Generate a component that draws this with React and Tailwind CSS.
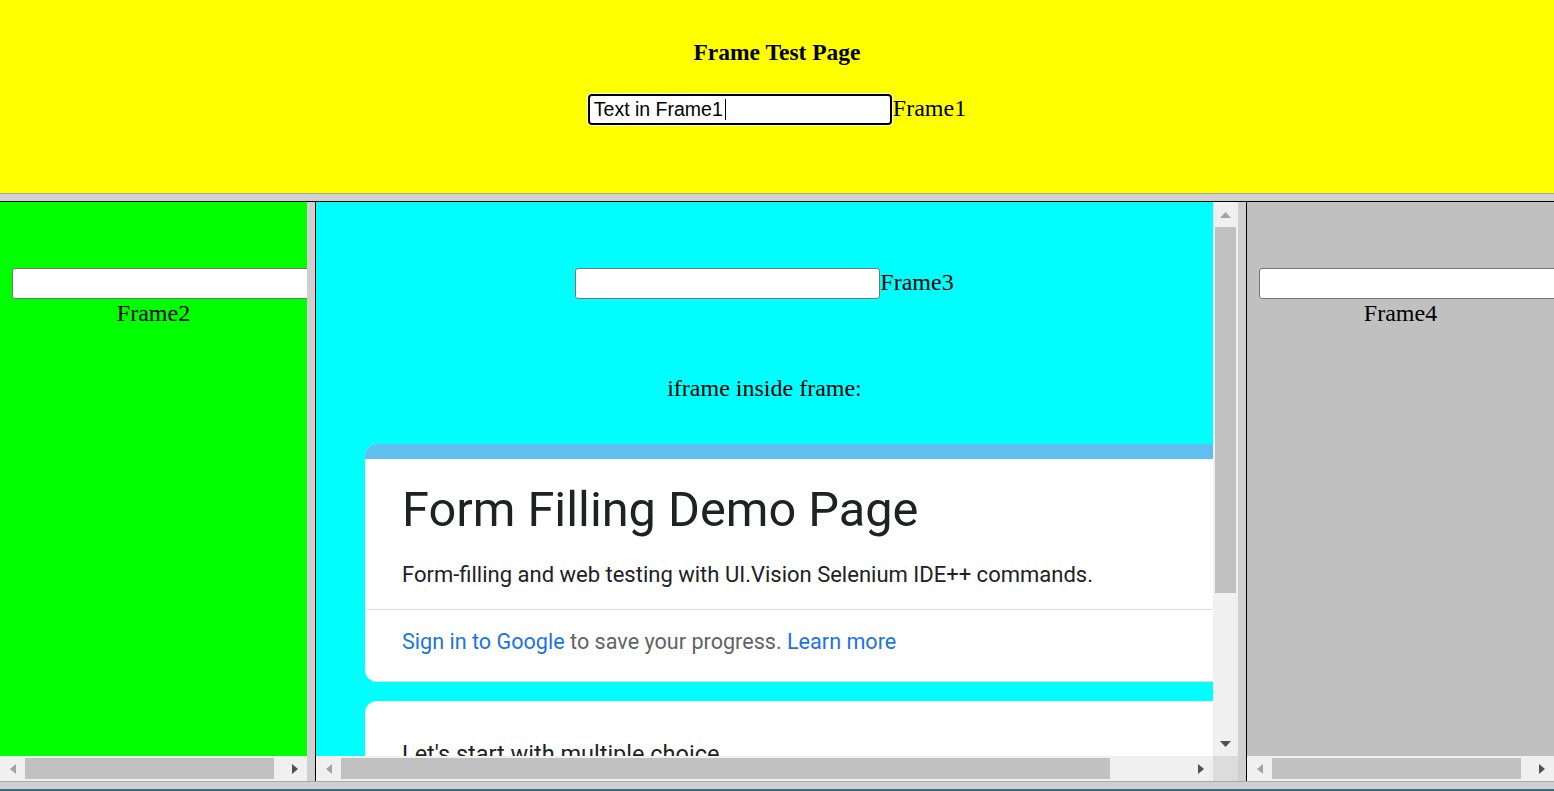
import React from "react";

const LeftArrow = ({ dark }) => (
  <svg width="6" height="10" viewBox="0 0 6 10">
    <polygon points="6,0 6,10 0,5" fill={dark ? "#505050" : "#a3a3a3"} />
  </svg>
);

const RightArrow = ({ dark }) => (
  <svg width="6" height="10" viewBox="0 0 6 10">
    <polygon points="0,0 0,10 6,5" fill={dark ? "#505050" : "#a3a3a3"} />
  </svg>
);

const UpArrow = ({ dark }) => (
  <svg width="11" height="6" viewBox="0 0 11 6">
    <polygon points="0,6 11,6 5.5,0" fill={dark ? "#505050" : "#a3a3a3"} />
  </svg>
);

const DownArrow = ({ dark }) => (
  <svg width="11" height="6" viewBox="0 0 11 6">
    <polygon points="0,0 11,0 5.5,6" fill={dark ? "#505050" : "#a3a3a3"} />
  </svg>
);

const HScroll = ({ thumb, className = "" }) => (
  <div className={`h-[25px] bg-[#f0f0f0] flex items-center ${className}`}>
    <div className="w-[25px] h-full flex items-center justify-center">
      <LeftArrow />
    </div>
    <div className={`h-[21px] bg-[#c1c1c1] ${thumb}`} />
    <div className="flex-1" />
    <div className="w-[25px] h-full flex items-center justify-center">
      <RightArrow dark />
    </div>
  </div>
);

const VScroll = () => (
  <div className="w-[25px] shrink-0 bg-[#f0f0f0] flex flex-col">
    <div className="h-[25px] flex items-center justify-center">
      <UpArrow />
    </div>
    <div className="h-[366px] mx-[2px] bg-[#c1c1c1]" />
    <div className="flex-1" />
    <div className="h-[25px] flex items-center justify-center">
      <DownArrow dark />
    </div>
  </div>
);

const EmptyInput = () => (
  <div className="w-[305px] h-[31px] shrink-0 bg-white border border-[#767676] rounded-[3px]" />
);

const SideFrame = ({ bg, label }) => (
  <div className={`w-[307px] shrink-0 flex flex-col ${bg}`}>
    <div className="h-[554px] overflow-hidden pt-[66px] pl-[12px]">
      <EmptyInput />
      <p className="w-[283px] text-center text-[24px] leading-[28px]">{label}</p>
    </div>
    <HScroll thumb="w-[249px]" />
  </div>
);

const FormCards = () => (
  <div className="w-[960px] font-['Roboto',sans-serif]">
    <div className="bg-white rounded-[12px] overflow-hidden border-b border-[#dadce0]">
      <div className="h-[15px] bg-[#5ebff0]" />
      <div className="pt-[21px] pb-[24px]">
        <h1 className="px-[37px] text-[48.7px] leading-[60px] text-[#202124]">
          Form Filling Demo Page
        </h1>
        <p className="mt-[20px] px-[37px] text-[22px] leading-[30px] text-[#202124]">
          Form-filling and web testing with UI.Vision Selenium IDE++ commands.
        </p>
        <div className="mt-[19px] ml-px h-px bg-[#dadce0]" />
        <p className="mt-[17px] px-[37px] text-[21.6px] leading-[30px] text-[#5f6368]">
          <span className="text-[#1a73e8]">Sign in to Google</span> to save your progress.{" "}
          <span className="text-[#1a73e8]">Learn more</span>
        </p>
      </div>
    </div>
    <div className="mt-[19px] bg-white rounded-[12px] pt-[35px] px-[37px] h-[200px]">
      <p className="text-[23.5px] leading-[36px] text-[#202124]">Let's start with multiple choice</p>
    </div>
  </div>
);

const Separator = () => (
  <div className="flex shrink-0">
    <div className="w-[8px] bg-[#d0d0d0]" />
    <div className="w-px bg-black" />
  </div>
);

export default function App() {
  return (
    <div className="w-[1554px] h-[791px] overflow-hidden flex flex-col bg-[#d0d0d0] text-black font-['Liberation_Serif',serif]">
      <div className="h-[193px] shrink-0 bg-[#ffff00] flex flex-col items-center pt-[38px]">
        <h4 className="font-bold text-[23.5px] leading-[28px]">Frame Test Page</h4>
        <div className="mt-[28px] flex items-baseline">
          <div className="w-[304px] h-[31px] border-2 border-black rounded-[4px] bg-white shadow-[0_0_0_1px_#ffffff] flex items-center pl-[4px] font-['Liberation_Sans',sans-serif] text-[19.5px]">
            <span>Text in Frame1</span>
            <span className="ml-[2px] w-px h-[21px] bg-black" />
          </div>
          <span className="ml-px text-[24px] leading-[28px]">Frame1</span>
        </div>
      </div>
      <div className="h-[8px] shrink-0 border-t border-[#a8a8a8] bg-[#d0d0d0]" />
      <div className="h-px shrink-0 bg-black" />
      <div className="h-[579px] shrink-0 flex">
        <SideFrame bg="bg-[#00ff00]" label="Frame2" />
        <Separator />
        <div className="w-[922px] shrink-0 flex flex-col">
          <div className="h-[554px] flex">
            <div className="w-[897px] overflow-hidden bg-[#00ffff] pt-[66px]">
              <div className="flex justify-center items-center">
                <EmptyInput />
                <span className="mb-[3px] text-[24px] leading-[28px]">Frame3</span>
              </div>
              <p className="mt-[75px] text-center text-[24px] leading-[28px]">iframe inside frame:</p>
              <div className="mt-[42px] pl-[49px]">
                <FormCards />
              </div>
            </div>
            <VScroll />
          </div>
          <div className="flex h-[25px]">
            <HScroll thumb="w-[769px]" className="flex-1" />
            <div className="w-[25px] bg-[#dcdcdc]" />
          </div>
        </div>
        <Separator />
        <SideFrame bg="bg-[#c0c0c0]" label="Frame4" />
      </div>
      <div className="h-[8px] shrink-0 border-t border-[#a8a8a8] bg-[#d0d0d0]" />
      <div className="h-[2px] shrink-0 bg-[#2f6f7c]" />
    </div>
  );
}
